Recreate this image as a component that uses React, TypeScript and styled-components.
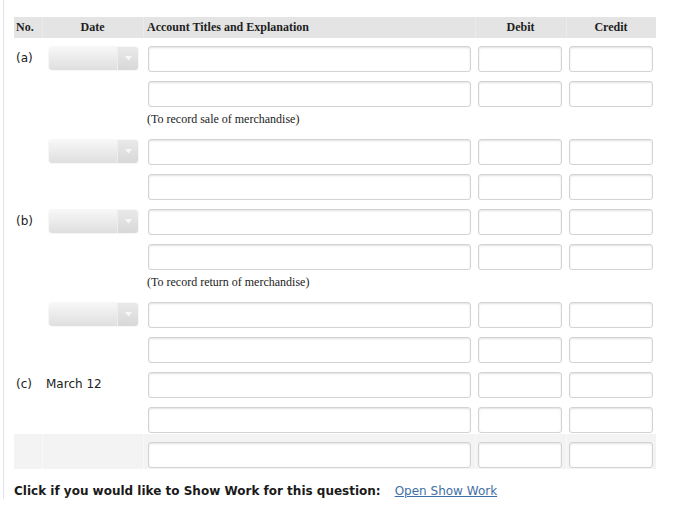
import React from "react";
import styled, { createGlobalStyle } from "styled-components";

const GlobalStyle = createGlobalStyle`
  html, body { margin: 0; padding: 0; background: #ffffff; }
  body { font-family: "DejaVu Sans", Verdana, sans-serif; color: #222; }
`;

const Frame = styled.div`
  margin-left: 3px;
  border-left: 1px solid #dfe5ec;
  padding: 17px 0 0 10px;
  min-height: 497px;
  box-sizing: border-box;
`;

const Table = styled.table`
  width: 642px;
  table-layout: fixed;
  border-collapse: collapse;
  border-spacing: 0;
`;

const HeadCell = styled.th<{ $align?: "left" | "center"; $pad?: number }>`
  height: 21px;
  padding: 0 0 0 ${(p) => p.$pad ?? 0}px;
  background: #e4e4e4;
  box-shadow: inset 1px 0 0 #ebebeb;
  font-family: "Liberation Serif", "Times New Roman", serif;
  font-weight: bold;
  font-size: 12px;
  color: #1e1e1e;
  text-align: ${(p) => p.$align ?? "center"};
  vertical-align: middle;
  &:first-child { box-shadow: none; }
`;

const Row = styled.tr<{ $shaded?: boolean }>`
  height: 35px;
  background: ${(p) => (p.$shaded ? "#f3f3f3" : "transparent")};
`;

const Cell = styled.td<{ $pad?: number; $shaded?: boolean }>`
  padding: 8px 0 1px ${(p) => p.$pad ?? 0}px;
  vertical-align: top;
  text-align: left;
  box-shadow: ${(p) => (p.$shaded ? "inset 1px 0 0 #f8f8f8" : "none")};
  &:first-child { box-shadow: none; }
`;

const Label = styled.div<{ $pad?: number }>`
  font-size: 12px;
  line-height: 24px;
  padding-left: ${(p) => p.$pad ?? 0}px;
  color: #222;
  white-space: nowrap;
`;

const NoteRow = styled.tr`
  height: 23px;
`;

const NoteCell = styled.td`
  padding: 0 0 0 4px;
  font-family: "Liberation Serif", "Times New Roman", serif;
  font-size: 12px;
  line-height: 23px;
  color: #222;
  vertical-align: middle;
`;

const TextInput = styled.input<{ $w: number }>`
  display: block;
  box-sizing: border-box;
  width: ${(p) => p.$w}px;
  height: 26px;
  margin: 0;
  border: 1px solid #d3d3d3;
  border-radius: 3px;
  background: #fff;
  box-shadow: inset 0 1px 2px rgba(0, 0, 0, 0.12);
  outline: none;
`;

const SelectBox = styled.div`
  display: flex;
  width: 89px;
  height: 23px;
  margin: 1px 0 0 7px;
  border-radius: 3px;
  overflow: hidden;
  box-shadow: 0 0 0 1px rgba(0, 0, 0, 0.03);
`;

const SelectBody = styled.div`
  flex: 1;
  background: linear-gradient(#f7f7f7, #dfdfdf);
`;

const SelectArrow = styled.div`
  width: 20px;
  display: flex;
  align-items: center;
  justify-content: center;
  border-left: 1px solid #eeeeee;
  background: linear-gradient(#e9e9e9, #d8d8d8);
`;

const Footer = styled.div`
  display: flex;
  align-items: baseline;
  gap: 14px;
  margin-top: 14px;
  font-size: 12px;
  line-height: 16px;
`;

const Prompt = styled.span`
  font-weight: bold;
  color: #1a1a1a;
`;

const Link = styled.a`
  color: #3f6fa6;
  text-decoration: underline;
  cursor: pointer;
`;

type Line =
  | { kind: "line"; no?: string; date?: "select" | string; shaded?: boolean }
  | { kind: "note"; text: string };

const lines: Line[] = [
  { kind: "line", no: "(a)", date: "select" },
  { kind: "line" },
  { kind: "note", text: "(To record sale of merchandise)" },
  { kind: "line", date: "select" },
  { kind: "line" },
  { kind: "line", no: "(b)", date: "select" },
  { kind: "line" },
  { kind: "note", text: "(To record return of merchandise)" },
  { kind: "line", date: "select" },
  { kind: "line" },
  { kind: "line", no: "(c)", date: "March 12" },
  { kind: "line" },
  { kind: "line", shaded: true },
];

const DateSelect = () => (
  <SelectBox>
    <SelectBody />
    <SelectArrow>
      <svg width="7" height="5" viewBox="0 0 7 5">
        <path d="M0 0 L7 0 L3.5 4.5 Z" fill="#f8f8f8" />
      </svg>
    </SelectArrow>
  </SelectBox>
);

export default function App() {
  return (
    <>
      <GlobalStyle />
      <Frame>
        <Table>
          <colgroup>
            <col style={{ width: 28 }} />
            <col style={{ width: 101 }} />
            <col style={{ width: 332 }} />
            <col style={{ width: 91 }} />
            <col style={{ width: 90 }} />
          </colgroup>
          <thead>
            <tr>
              <HeadCell $align="left" $pad={2}>No.</HeadCell>
              <HeadCell>Date</HeadCell>
              <HeadCell $align="left" $pad={4}>Account Titles and Explanation</HeadCell>
              <HeadCell>Debit</HeadCell>
              <HeadCell>Credit</HeadCell>
            </tr>
          </thead>
          <tbody>
            {lines.map((l, i) =>
              l.kind === "note" ? (
                <NoteRow key={i}>
                  <td />
                  <td />
                  <NoteCell colSpan={3}>{l.text}</NoteCell>
                </NoteRow>
              ) : (
                <Row key={i} $shaded={l.shaded}>
                  <Cell $pad={2} $shaded={l.shaded}>
                    {l.no && <Label>{l.no}</Label>}
                  </Cell>
                  <Cell $shaded={l.shaded}>
                    {l.date === "select" ? (
                      <DateSelect />
                    ) : l.date ? (
                      <Label $pad={4}>{l.date}</Label>
                    ) : null}
                  </Cell>
                  <Cell $pad={5} $shaded={l.shaded}>
                    <TextInput $w={323} />
                  </Cell>
                  <Cell $pad={3} $shaded={l.shaded}>
                    <TextInput $w={84} />
                  </Cell>
                  <Cell $pad={3} $shaded={l.shaded}>
                    <TextInput $w={84} />
                  </Cell>
                </Row>
              )
            )}
          </tbody>
        </Table>
        <Footer>
          <Prompt>Click if you would like to Show Work for this question:</Prompt>
          <Link>Open Show Work</Link>
        </Footer>
      </Frame>
    </>
  );
}
